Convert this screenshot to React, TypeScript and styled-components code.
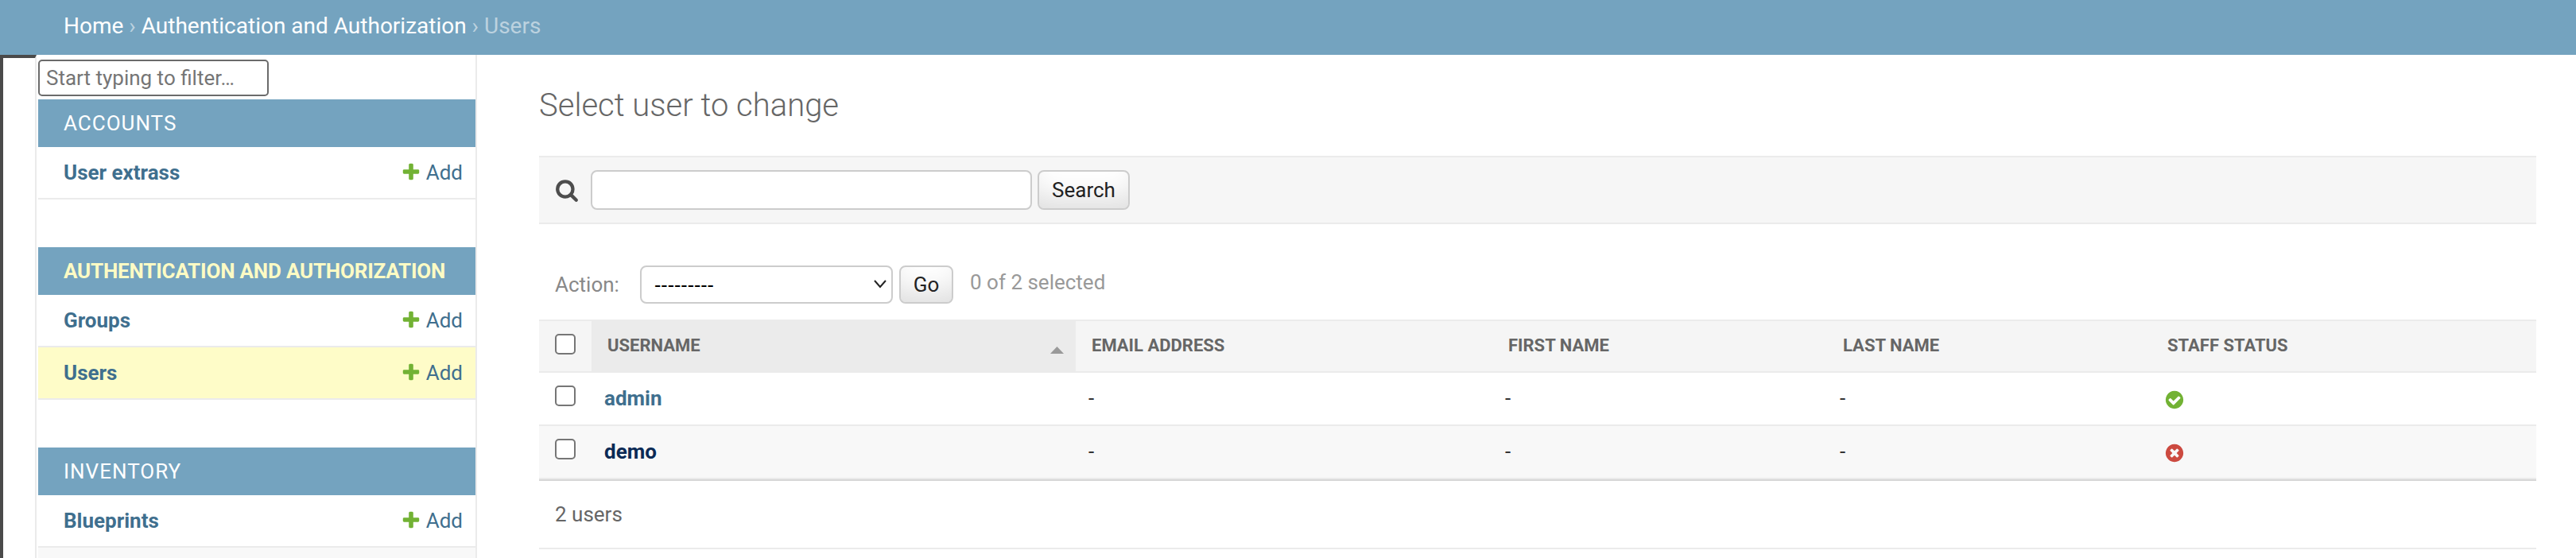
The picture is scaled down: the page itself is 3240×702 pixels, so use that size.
import React from "react";
import styled, { createGlobalStyle } from "styled-components";

const Global = createGlobalStyle`
  html, body { margin: 0; padding: 0; height: 702px; overflow: hidden; background: #fff; }
  #root { height: 702px; }
  * { box-sizing: border-box; }
  body { font-family: Roboto, "Liberation Sans", sans-serif; color: #333; }
`;

const primary = "#74a3bf";
const link = "#3f6f8e";
const hairline = "#ebebeb";
const green = "#72b234";

const Page = styled.div`
  width: 3240px;
  height: 702px;
  display: flex;
  flex-direction: column;
  overflow: hidden;
`;

const Breadcrumbs = styled.nav`
  height: 69px;
  flex: none;
  background: ${primary};
  padding: 15px 80px 0;
  font-size: 28px;
  line-height: 36px;
  color: #bcd2df;
`;

const Crumb = styled.a`
  color: #fff;
  text-decoration: none;
`;

const Body = styled.div`
  flex: 1;
  display: flex;
  min-height: 0;
  overflow: hidden;
`;

const Toggle = styled.button`
  flex: none;
  width: 46px;
  padding: 0;
  background: #fff;
  border-style: solid;
  border-width: 4px 2px 0 4px;
  border-color: #4a4a4a ${hairline} #4a4a4a #4a4a4a;
`;

const Sidebar = styled.aside`
  flex: none;
  width: 554px;
  padding-left: 2px;
  border-right: 2px solid ${hairline};
`;

const Filter = styled.input`
  display: block;
  width: 290px;
  height: 46px;
  margin: 6px 0 4px;
  padding: 0 8px;
  border: 2px solid #6b6b6b;
  border-radius: 5px;
  background: #fff;
  font-family: inherit;
  font-size: 26px;
  color: #333;
  &::placeholder { color: #757575; opacity: 1; }
`;

const NavModule = styled.section`
  margin-bottom: 60px;
`;

const Caption = styled.h2<{ $current?: boolean }>`
  margin: 0;
  height: 60px;
  padding: 0 32px;
  background: ${primary};
  font-size: 26px;
  line-height: 60px;
  letter-spacing: ${(p) => (p.$current ? "-0.2px" : "1px")};
  white-space: nowrap;
  font-weight: ${(p) => (p.$current ? 700 : 400)};
  color: ${(p) => (p.$current ? "#fdfbc4" : "#fff")};
  text-transform: uppercase;
`;

const NavRow = styled.div<{ $current?: boolean; $alt?: boolean }>`
  display: flex;
  justify-content: space-between;
  height: 66px;
  padding: 16px 16px 0 32px;
  border-bottom: 2px solid ${hairline};
  font-size: 26px;
  line-height: 32px;
  background: ${(p) => (p.$current ? "#fefcc8" : p.$alt ? "#f8f8f8" : "#fff")};
`;

const ModelLink = styled.a`
  color: ${link};
  font-weight: 700;
  text-decoration: none;
`;

const AddLink = styled.a`
  display: flex;
  color: ${link};
  text-decoration: none;
`;

const PlusIcon = styled.svg`
  width: 26px;
  height: 26px;
  margin: 2px 6px 0 0;
  flex: none;
`;

const Content = styled.main`
  flex: 1;
  min-width: 0;
  padding: 0 50px 0 78px;
`;

const Title = styled.h1`
  margin: 0;
  padding-top: 40px;
  height: 127px;
  font-size: 40px;
  line-height: 48px;
  font-weight: 300;
  color: #666;
`;

const SearchBar = styled.form`
  height: 86px;
  display: flex;
  align-items: center;
  padding-left: 20px;
  background: #f6f6f6;
  border-top: 2px solid ${hairline};
  border-bottom: 2px solid ${hairline};
`;

const SearchIcon = styled.svg`
  width: 30px;
  height: 30px;
  margin-right: 15px;
  flex: none;
`;

const SearchInput = styled.input`
  width: 555px;
  height: 50px;
  margin-right: 7px;
  padding: 0 10px;
  background: #fff;
  border: 2px solid #ccc;
  border-radius: 8px;
  font-family: inherit;
  font-size: 26px;
`;

const Button = styled.button<{ $w: number; $h: number }>`
  width: ${(p) => p.$w}px;
  height: ${(p) => p.$h}px;
  padding: 0;
  background: #fff;
  border: 2px solid #ccc;
  border-radius: 8px;
  box-shadow: inset 0 -30px 40px -20px rgba(0, 0, 0, 0.15);
  font-family: inherit;
  font-size: 26px;
  color: #222;
`;

const Actions = styled.div`
  height: 120px;
  padding: 52px 0 0 20px;
  display: flex;
  align-items: flex-start;
  font-size: 26px;
  line-height: 48px;
`;

const ActionLabel = styled.label`
  width: 107px;
  color: #888;
  flex: none;
`;

const SelectWrap = styled.div`
  position: relative;
  width: 318px;
  height: 48px;
  margin-right: 8px;
`;

const ActionSelect = styled.select`
  appearance: none;
  display: block;
  width: 100%;
  height: 100%;
  padding: 0 0 0 16px;
  background: #fff;
  border: 2px solid #ccc;
  border-radius: 8px;
  font-family: "Liberation Sans", sans-serif;
  font-size: 25px;
  color: #000;
`;

const Chevron = styled.svg`
  position: absolute;
  top: 17px;
  right: 7px;
  width: 18px;
  height: 12px;
`;

const Counter = styled.span`
  margin: -3px 0 0 21px;
  color: #999;
`;

const Results = styled.div`
  border-bottom: 2px solid #d6d6d6;
`;

const Table = styled.table`
  width: 100%;
  table-layout: fixed;
  border-collapse: separate;
  border-spacing: 0;
`;

const HeadCell = styled.th<{ $sorted?: boolean }>`
  position: relative;
  height: 67px;
  padding: 0 20px 1px;
  text-align: left;
  background: ${(p) => (p.$sorted ? "#ebebeb" : "#f5f5f5")};
  border-top: 2px solid ${hairline};
  border-bottom: 2px solid ${hairline};
  font-size: 22px;
  line-height: 32px;
  font-weight: 700;
  color: #666;
  text-transform: uppercase;
`;

const CheckHead = styled(HeadCell)`
  padding: 0 0 0 20px;
  vertical-align: top;
`;

const SortArrow = styled.svg`
  position: absolute;
  top: 32px;
  right: 15px;
  width: 17px;
  height: 9px;
`;

const Row = styled.tr<{ $alt?: boolean }>`
  background: ${(p) => (p.$alt ? "#f8f8f8" : "#fff")};
`;

const Cell = styled.td`
  height: 67px;
  padding: 16px;
  vertical-align: top;
  border-bottom: 2px solid ${hairline};
  font-size: 26px;
  line-height: 32px;
  color: #333;
`;

const CheckCell = styled(Cell)`
  padding: 16px 0 0 20px;
`;

const Check = styled.input`
  appearance: none;
  display: block;
  width: 26px;
  height: 26px;
  margin: 0;
  background: #fff;
  border: 2px solid #767676;
  border-radius: 5px;
`;

const HeadCheck = styled(Check)`
  margin-top: 16px;
`;

const UserLink = styled.a<{ $hover?: boolean }>`
  color: ${(p) => (p.$hover ? "#0b2a55" : link)};
  font-weight: 700;
  text-decoration: none;
`;

const StatusIcon = styled.svg`
  display: block;
  width: 26px;
  height: 26px;
  margin-top: 5px;
`;

const Paginator = styled.p`
  margin: 0;
  height: 86px;
  padding: 26px 20px 0;
  border-bottom: 2px solid ${hairline};
  font-size: 26px;
  line-height: 32px;
  color: #666;
`;

const Plus = () => (
  <PlusIcon viewBox="0 0 1792 1792">
    <path fill={green} d="M1600 796v192q0 40-28 68t-68 28h-416v416q0 40-28 68t-68 28h-192q-40 0-68-28t-28-68v-416h-416q-40 0-68-28t-28-68v-192q0-40 28-68t68-28h416v-416q0-40 28-68t68-28h192q40 0 68 28t28 68v416h416q40 0 68 28t28 68z" />
  </PlusIcon>
);

const Model = ({ name, current, alt }: { name?: string; current?: boolean; alt?: boolean }) => (
  <NavRow $current={current} $alt={alt}>
    {name && <ModelLink href="#">{name}</ModelLink>}
    {name && (
      <AddLink href="#">
        <Plus />
        Add
      </AddLink>
    )}
  </NavRow>
);

const users = [
  { name: "admin", staff: true },
  { name: "demo", staff: false },
];

const columns = [66, 609, 524, 421, 408, 484];

export default function App() {
  return (
    <Page>
      <Global />
      <Breadcrumbs>
        <Crumb href="#">Home</Crumb> › <Crumb href="#">Authentication and Authorization</Crumb> › Users
      </Breadcrumbs>
      <Body>
        <Toggle aria-label="Toggle navigation" />
        <Sidebar>
          <Filter placeholder="Start typing to filter…" />
          <NavModule>
            <Caption>Accounts</Caption>
            <Model name="User extrass" />
          </NavModule>
          <NavModule>
            <Caption $current>Authentication and Authorization</Caption>
            <Model name="Groups" />
            <Model name="Users" current />
          </NavModule>
          <NavModule>
            <Caption>Inventory</Caption>
            <Model name="Blueprints" />
            <Model alt />
          </NavModule>
        </Sidebar>
        <Content>
          <Title>Select user to change</Title>
          <SearchBar>
            <SearchIcon viewBox="0 0 1792 1792">
              <path fill="#4d4d4d" d="M1216 832q0-185-131.500-316.500t-316.500-131.500-316.500 131.500-131.500 316.500 131.500 316.500 316.500 131.500 316.500-131.500 131.500-316.500zm512 832q0 52-38 90t-90 38q-54 0-90-38l-343-342q-179 124-399 124-143 0-273.500-55.500t-225-150-150-225-55.500-273.500 55.500-273.500 150-225 225-150 273.500-55.500 273.500 55.500 225 150 150 225 55.500 273.500q0 220-124 399l343 343q37 37 37 90z" />
            </SearchIcon>
            <SearchInput />
            <Button type="button" $w={116} $h={50}>Search</Button>
          </SearchBar>
          <Actions>
            <ActionLabel>Action:</ActionLabel>
            <SelectWrap>
              <ActionSelect defaultValue="">
                <option value="">---------</option>
              </ActionSelect>
              <Chevron viewBox="0 0 18 12">
                <path d="M2 2l7 8 7-8" fill="none" stroke="#222" strokeWidth="2" />
              </Chevron>
            </SelectWrap>
            <Button type="button" $w={68} $h={48}>Go</Button>
            <Counter>0 of 2 selected</Counter>
          </Actions>
          <Results>
            <Table>
              <colgroup>
                {columns.map((w, i) => (
                  <col key={i} style={{ width: w }} />
                ))}
              </colgroup>
              <thead>
                <tr>
                  <CheckHead><HeadCheck type="checkbox" /></CheckHead>
                  <HeadCell $sorted>
                    Username
                    <SortArrow viewBox="0 0 17 9">
                      <path d="M8.500 0L17 9H0z" fill="#999" />
                    </SortArrow>
                  </HeadCell>
                  <HeadCell>Email address</HeadCell>
                  <HeadCell>First name</HeadCell>
                  <HeadCell>Last name</HeadCell>
                  <HeadCell>Staff status</HeadCell>
                </tr>
              </thead>
              <tbody>
                {users.map((u, i) => (
                  <Row key={u.name} $alt={i % 2 === 1}>
                    <CheckCell><Check type="checkbox" /></CheckCell>
                    <Cell><UserLink href="#" $hover={u.name === "demo"}>{u.name}</UserLink></Cell>
                    <Cell>-</Cell>
                    <Cell>-</Cell>
                    <Cell>-</Cell>
                    <Cell>
                      <StatusIcon viewBox="0 0 1792 1792">
                        {u.staff ? (
                          <path fill={green} d="M1412 734q0-28-18-46l-91-90q-19-19-45-19t-45 19l-408 407-226-226q-19-19-45-19t-45 19l-91 90q-18 18-18 46 0 27 18 45l362 362q19 19 45 19 27 0 46-19l543-543q18-18 18-45zm252 162q0 209-103 385.500t-279.500 279.500-385.500 103-385.500-103-279.500-279.500-103-385.500 103-385.500 279.500-279.500 385.500-103 385.500 103 279.500 279.500 103 385.500z" />
                        ) : (
                          <path fill="#cc4a40" d="M1277 1122q0-26-19-45l-181-181 181-181q19-19 19-45 0-27-19-46l-90-90q-19-19-46-19-26 0-45 19l-181 181-181-181q-19-19-45-19-27 0-46 19l-90 90q-19 19-19 46 0 26 19 45l181 181-181 181q-19 19-19 45 0 27 19 46l90 90q19 19 46 19 26 0 45-19l181-181 181 181q19 19 45 19 27 0 46-19l90-90q19-19 19-46zm387-226q0 209-103 385.500t-279.500 279.500-385.500 103-385.500-103-279.500-279.500-103-385.500 103-385.500 279.500-279.500 385.500-103 385.500 103 279.500 279.500 103 385.500z" />
                        )}
                      </StatusIcon>
                    </Cell>
                  </Row>
                ))}
              </tbody>
            </Table>
          </Results>
          <Paginator>2 users</Paginator>
        </Content>
      </Body>
    </Page>
  );
}
